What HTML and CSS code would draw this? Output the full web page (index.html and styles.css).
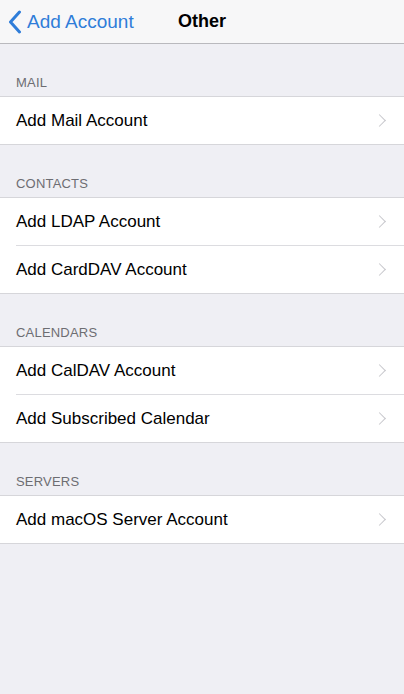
FILE: index.html
```html
<!DOCTYPE html>
<html lang="en">
<head>
  <meta charset="UTF-8">
  <title>Other</title>
  <link rel="stylesheet" href="styles.css">
</head>
<body>
  <div class="navbar">
    <a class="back" href="#">
      <svg class="back-icon" width="14" height="24" viewBox="0 0 14 24"><path d="M11.5 2 L2.5 12 L11.5 22" fill="none" stroke="#2f7dd9" stroke-width="3" stroke-linecap="round" stroke-linejoin="round"/></svg>
      <span>Add Account</span>
    </a>
    <div class="title">Other</div>
  </div>

  <div class="section-header">MAIL</div>
  <div class="group">
    <div class="row"><span>Add Mail Account</span><span class="chev"></span></div>
  </div>

  <div class="section-header">CONTACTS</div>
  <div class="group">
    <div class="row"><span>Add LDAP Account</span><span class="chev"></span></div>
    <div class="row"><span>Add CardDAV Account</span><span class="chev"></span></div>
  </div>

  <div class="section-header">CALENDARS</div>
  <div class="group">
    <div class="row"><span>Add CalDAV Account</span><span class="chev"></span></div>
    <div class="row"><span>Add Subscribed Calendar</span><span class="chev"></span></div>
  </div>

  <div class="section-header">SERVERS</div>
  <div class="group">
    <div class="row"><span>Add macOS Server Account</span><span class="chev"></span></div>
  </div>
</body>
</html>
```

FILE: styles.css
```css
body {
  margin: 0;
  background: #efeff4;
  font-family: "Liberation Sans", Arial, sans-serif;
  color: #000;
  height: 694px;
}
.navbar {
  position: relative;
  height: 43px;
  background: #f7f7f8;
  border-bottom: 1px solid #b9b9bd;
  display: flex;
  align-items: center;
  justify-content: center;
}
.back {
  position: absolute;
  left: 8px;
  top: 0;
  height: 43px;
  display: flex;
  align-items: center;
  gap: 5px;
  color: #2f7dd9;
  text-decoration: none;
  font-size: 19px;
}
.title {
  font-size: 18px;
  font-weight: bold;
}
.section-header {
  height: 52px;
  box-sizing: border-box;
  padding: 31px 16px 0;
  font-size: 13px;
  color: #6d6d72;
  letter-spacing: 0.2px;
}
.group {
  background: #fff;
  border-top: 1px solid #d6d6da;
  border-bottom: 1px solid #d6d6da;
}
.row {
  height: 47px;
  margin-left: 16px;
  padding-right: 18px;
  display: flex;
  align-items: center;
  justify-content: space-between;
  font-size: 17px;
}
.row + .row {
  border-top: 1px solid #dcdce0;
}
.chev {
  width: 8px;
  height: 8px;
  border-top: 1.5px solid #c7c7cc;
  border-right: 1.5px solid #c7c7cc;
  transform: rotate(45deg);
  margin-right: 2px;
}
```
